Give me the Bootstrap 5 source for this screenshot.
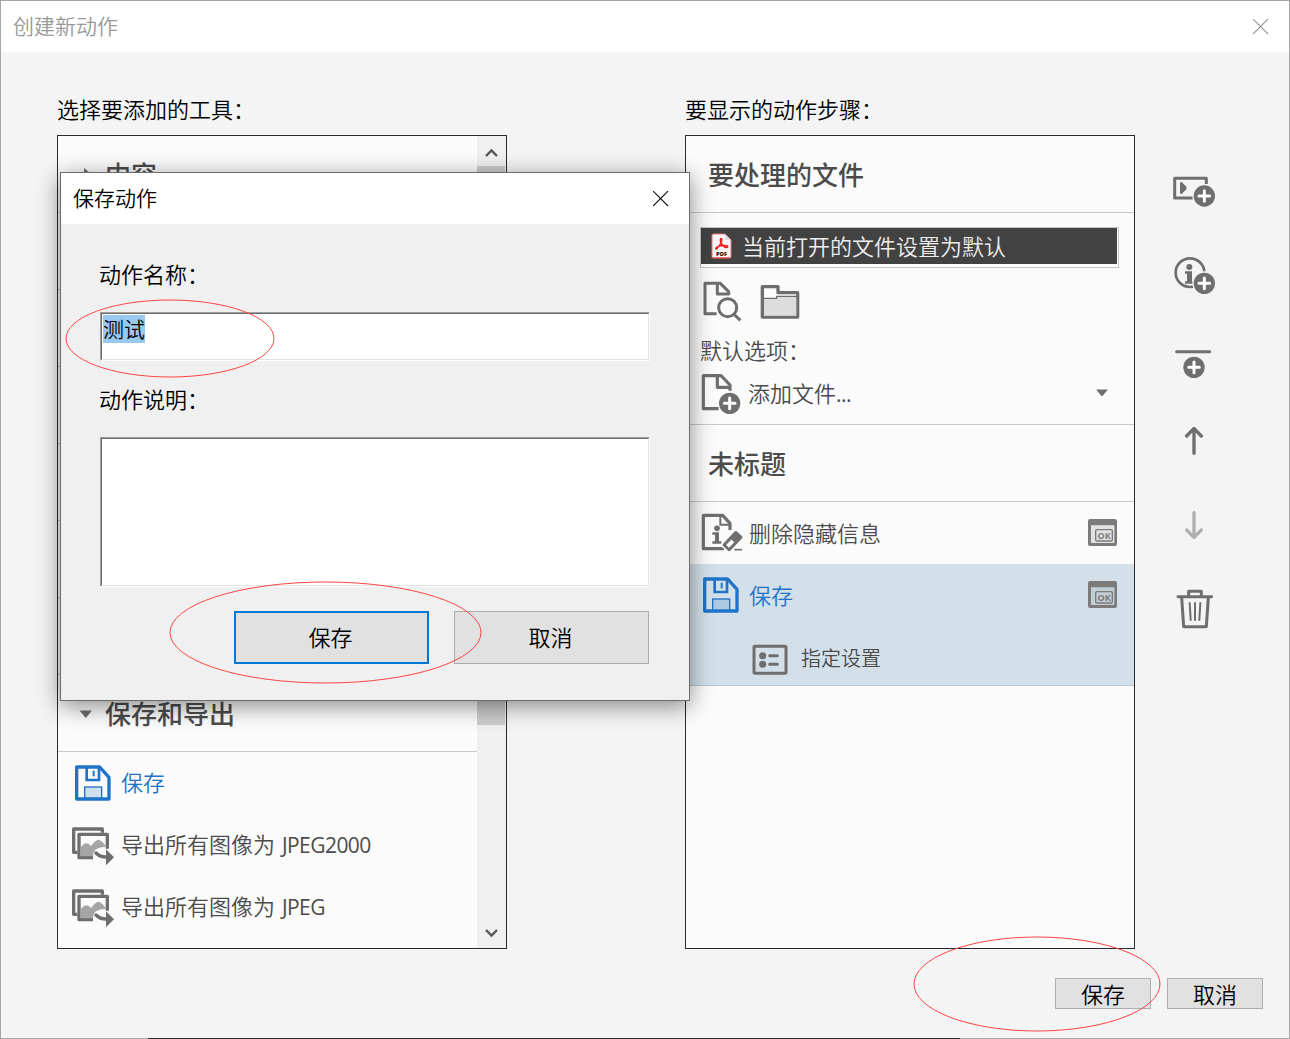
<!DOCTYPE html>
<html lang="zh-CN">
<head>
<meta charset="utf-8">
<title>创建新动作</title>
<meta name="viewport" content="width=device-width, initial-scale=1">
<link href="https://cdn.jsdelivr.net/npm/bootstrap@5.3.0/dist/css/bootstrap.min.css" rel="stylesheet">
<style>
  body{font-family:"Noto Sans CJK SC",sans-serif;font-size:22px;line-height:30px;font-weight:350;color:#000;background:#a6a6a6;width:1290px;height:1039px;overflow:hidden}
  svg{display:block;flex:none}
  .window{width:1290px;height:1039px;border:1px solid #a6a6a6;background:#f4f4f4}
  .titlebar{height:51px;font-size:21px;padding:0 20px 0 12px;background:#fff}
  .titlebar span{padding-bottom:4px}
  .window>.titlebar{color:#999}
  .workarea{padding:41px 0 0 56px}
  .tool-col{width:450px;margin-right:178px}
  .step-col{width:450px}
  .pane{height:814px;border:1px solid #2b2b2b;background:#fbfbfb;color:#4b4b4b;margin-top:12px;overflow:hidden}
  .group-head{height:77px;border-bottom:1px solid #c8c8c8;font-size:26px;font-weight:500;line-height:36px;padding-top:20px}
  .tool-list .group-head{padding-left:21px}
  .tool-list .group-head svg{margin-right:13px}
  .tool-list .group-head svg.shut{margin-right:10px}
  .tool-list .entry svg{margin-top:1px}
  .tool-list .entry.accent svg{margin-top:-1px}
  .step-list .group-head{padding-left:22px}
  .entry{height:62px}
  .entry span{padding-bottom:3px}
  .entry.accent span{padding-bottom:4px}
  .entry .latin{padding:0}
  .tool-list .entry{padding-left:13px}
  .accent{color:#1f73c9}
  .latin{font-family:"Open Sans",sans-serif;font-size:21px;letter-spacing:-.55px;font-weight:400;margin-left:2px}
  .scroller{width:29px;background:#f0f0f0;padding:12px 0 10px}
  .thumb{width:28px;height:559px;background:#cdcdcd;margin-top:8px}
  .files{height:212px;border-bottom:1px solid #c8c8c8;padding:14px 15px 0 14px}
  .file-box{height:41px;border:1px solid #c4c4c4;background:#fff}
  .file-pick{height:36px;background:#424242;color:#eee;padding-left:10px;margin-right:1px}
  .file-pick span{padding:0 0 3px 10px}
  .default-label{margin-top:12px}
  .default-row{margin-top:6px}
  .default-row span{padding-bottom:1px}
  .step-text{margin-left:6px}
  .raise{margin-top:-2px}
  .chosen{height:122px;background:#d3e0e9;border-bottom:1px solid #b9c6ce}
  .step-list .entry{padding:0 16px 0 14px}
  .sub{padding:9px 0 0 66px;font-size:20px;margin-top:8px}
  .sub span{padding:0 0 3px 5px}
  .side{width:60px;margin-left:29px;padding-top:82px}
  .push{height:31px;width:96px;border:1px solid #adadad;background:#e1e1e1;color:#000;font-size:22px;font-weight:350;line-height:28px;padding:0 0 2px;border-radius:0}
  .foot{padding:29px 26px 0 0;gap:16px}
  .dialog-box{position:absolute;left:60px;top:172px;width:630px;height:529px;border:1px solid #6c6c6c;background:#f0f0f0;box-shadow:0 5px 22px rgba(0,0,0,.45)}
  .fields{padding:34px 39px 0}
  .field-name{margin-left:-1px}
  .field-name.second{margin-top:22px}
  .sunken{background:#fff;border:1px solid;border-color:#a0a0a0 #fff #fff #a0a0a0;width:550px}
  .sunken>div{border:1px solid;border-color:#696969 #e3e3e3 #e3e3e3 #696969;padding:1px}
  .name-in{height:47px;font-size:21px;line-height:26px}
  .name-in span{display:inline-block;height:28px;background:#99c9ef}
  .note-in{height:148px}
  .big .push{width:195px;height:53px;line-height:46px;padding:0 2px 4px 0}
  .big{gap:25px;padding-right:1px;margin-top:24px}
  .push.ready{border:2px solid #0078d7}
  .markup{position:absolute;left:0;top:0;pointer-events:none}
  .behind{position:absolute;left:148px;top:1038px;width:812px;height:1px;background:#2b2b2b}
</style>
<script src="https://cdn.jsdelivr.net/npm/bootstrap@5.3.0/dist/js/bootstrap.bundle.min.js"></script>
</head>
<body class="position-relative">
<svg width="0" height="0" class="position-absolute">
  <defs>
    <symbol id="plus" viewBox="0 0 72 72"><circle cx="36" cy="36" r="32" fill="#6e6e6e"/><path d="M36 20V52M20 36H52" stroke="#fff" stroke-width="9" stroke-linecap="round"/></symbol>
    <symbol id="floppy" viewBox="66 438 114 114"><path d="M74 447H143L171 478V543H74Z" fill="none" stroke="#1f73c9" stroke-width="10" stroke-linejoin="round"/><path d="M104 447V486H141V447" fill="none" stroke="#1f73c9" stroke-width="8"/><rect x="122" y="458" width="6" height="17" fill="#1f73c9"/><rect x="98" y="507" width="51" height="37" fill="#1f73c9" fill-opacity=".2" stroke="#1f73c9" stroke-width="4"/></symbol>
    <symbol id="images" viewBox="93 438 132 120"><path d="M112 517H101V447H187V458" fill="none" stroke="#6e6e6e" stroke-width="10" stroke-linejoin="round"/><path d="M159 533H117V463H202V506" fill="none" stroke="#6e6e6e" stroke-width="10" stroke-linejoin="round"/><path d="M122 529V502Q139 480 153 498Q164 482 175 479Q188 482 198 500Q180 500 168 508Q160 514 159 529Z" fill="#a5a5a5"/><path d="M168 519Q181 532 201 531" fill="none" stroke="#6e6e6e" stroke-width="10" stroke-linecap="round"/><path d="M198 508L222 532 198 556Z" fill="#6e6e6e"/></symbol>
    <symbol id="prompt" viewBox="1221 264 93 87"><path fill-rule="evenodd" d="M1230 267H1305Q1311 267 1311 273V342Q1311 348 1305 348H1230Q1224 348 1224 342V273Q1224 267 1230 267ZM1233 286V339H1303V286Z" fill="#7b7b7b"/><path d="M1233 286H1303V339H1233Z" fill="#888" fill-opacity=".22"/><rect x="1247" y="299" width="50" height="34" rx="4" fill="none" stroke="#7b7b7b" stroke-width="4"/><text x="1272.5" y="325.500" text-anchor="middle" font-family="Open Sans" font-weight="700" font-size="27" fill="#7b7b7b">OK</text></symbol>
  </defs>
</svg>

<div class="window">
  <header class="titlebar d-flex align-items-center justify-content-between">
    <span>创建新动作</span>
    <svg width="16" height="16" viewBox="0 0 16 16" stroke="#999" stroke-width="1.1"><path d="M0 0L15 15M15 0L0 15"/></svg>
  </header>

  <main class="workarea d-flex">
    <section class="tool-col">
      <div>选择要添加的工具：</div>
      <div class="pane tool-list d-flex">
        <div class="flex-grow-1">
          <div class="group-head d-flex"><svg class="shut" width="16" height="36" viewBox="0 0 16 36"><path d="M5 12L12 18 5 24Z" fill="#6e6e6e"/></svg>内容</div>
          <div class="group-head"></div><div class="group-head"></div><div class="group-head"></div>
          <div class="group-head"></div><div class="group-head"></div><div class="group-head"></div>
          <div class="group-head d-flex"><svg width="13" height="36" viewBox="0 0 13 36"><path d="M.5 15.500H13L6.800 23Z" fill="#6e6e6e"/></svg>保存和导出</div>
          <div class="entry d-flex align-items-center accent"><svg width="50" height="38"><use href="#floppy" x="3" y="0" width="38" height="38"/></svg><span>保存</span></div>
          <div class="entry d-flex align-items-center"><svg width="50" height="40"><use href="#images" x="0" y="0" width="44" height="40"/></svg><span>导出所有图像为 <span class="latin">JPEG2000</span></span></div>
          <div class="entry d-flex align-items-center"><svg width="50" height="40"><use href="#images" x="0" y="0" width="44" height="40"/></svg><span>导出所有图像为 <span class="latin">JPEG</span></span></div>
        </div>
        <div class="scroller d-flex flex-column justify-content-between">
          <div>
            <svg class="mx-auto" width="13" height="10" viewBox="0 0 13 10"><path d="M1 8L6.500 2.500 12 8" fill="none" stroke="#555" stroke-width="2.400"/></svg>
            <div class="thumb"></div>
          </div>
          <svg class="mx-auto" width="13" height="10" viewBox="0 0 13 10"><path d="M1 2L6.500 7.500 12 2" fill="none" stroke="#555" stroke-width="2.400"/></svg>
        </div>
      </div>
    </section>

    <section class="step-col">
      <div>要显示的动作步骤：</div>
      <div class="pane step-list">
        <div class="group-head">要处理的文件</div>
        <div class="files">
          <div class="file-box"><div class="file-pick d-flex align-items-center">
            <svg width="21" height="26" viewBox="0 0 21 26"><path d="M2.500 1H14L20 7V23.500Q20 25 18.500 25H2.500Q1 25 1 23.500V2.500Q1 1 2.500 1Z" fill="#f7f7f7" stroke="#e8797b" stroke-width="1"/><path d="M14 1L20 7H14Z" fill="#ddd"/><path d="M9.800 5.500C12.200 5 10.500 11 5.600 16C3.500 16.200 5 13.300 10 12.700C15.500 11.800 18 13.300 16 14.500C13 15 8 9 9.800 5.500Z" fill="none" stroke="#f02222" stroke-width="1.500"/><text x="10.500" y="23" text-anchor="middle" font-family="Open Sans" font-size="5.800" font-weight="800" fill="#222">PDF</text><path d="M2 25H19" stroke="#e03030"/></svg>
            <span>当前打开的文件设置为默认</span></div></div>
          <div class="d-flex mt-2 pt-1">
            <svg width="42" height="42" viewBox="60 30 126 126" fill="none" stroke="#6e6e6e" stroke-width="9" stroke-linejoin="round"><path d="M110 131H75V40H121L146 65V75"/><path d="M112 42V72H148"/><circle cx="143" cy="113" r="27"/><path d="M163 134L181 151" stroke-width="9"/></svg>
            <svg class="ms-3" width="42" height="42" viewBox="234 30 126 126" fill="none" stroke="#6e6e6e" stroke-width="10" stroke-linejoin="round"><path d="M247 50H294V68H353V141H247Z"/><path d="M252 86H290V80H349V137H252Z" fill="#ddd" stroke="none"/><path d="M250 85H290V79H350" stroke-width="4"/></svg>
          </div>
          <div class="default-label">默认选项：</div>
          <div class="d-flex align-items-center justify-content-between default-row">
            <div class="d-flex align-items-center">
              <svg width="42" height="46" viewBox="60 300 126 138" fill="none" stroke="#6e6e6e" stroke-width="9.500" stroke-linejoin="round"><path d="M116 416H70V317H123L150 345V362"/><path d="M112 318V352H150"/><use href="#plus" x="113" y="364" width="72" height="72" stroke="none"/></svg>
              <span class="step-text">添加文件<span class="latin m-0">...</span></span>
            </div>
            <svg class="me-2" width="16" height="8" viewBox="0 0 16 8"><path d="M1 .5H13L7 7.500Z" fill="#6e6e6e"/></svg>
          </div>
        </div>
        <div class="group-head">未标题</div>
        <div class="entry d-flex align-items-center">
          <svg width="43" height="42" viewBox="60 246 129 126"><path d="M132 356H70V256H128L150 280V300" fill="none" stroke="#6e6e6e" stroke-width="9.500" stroke-linejoin="round"/><path d="M121 258V284H150" fill="none" stroke="#6e6e6e" stroke-width="6"/><circle cx="111" cy="295" r="8.500" fill="#6e6e6e"/><path d="M97 307H117V334H124V341H97V334H105V314H97Z" fill="#6e6e6e"/><g transform="rotate(-47 157 334)"><rect x="123" y="315" width="68" height="38" rx="8" fill="#fbfbfb"/><rect x="128" y="319" width="60" height="30" rx="5" fill="#6e6e6e"/><rect x="136" y="328" width="23" height="12" fill="#fbfbfb"/></g><path d="M163 359H186" stroke="#6e6e6e" stroke-width="5"/></svg>
          <span class="step-text flex-grow-1">删除隐藏信息</span>
          <svg class="raise" width="31" height="29"><use href="#prompt"/></svg>
        </div>
        <div class="chosen">
          <div class="entry d-flex align-items-center">
            <svg width="43" height="38"><use href="#floppy" x="2" y="0" width="38" height="38"/></svg>
            <span class="step-text flex-grow-1 accent">保存</span>
            <svg class="raise" width="31" height="29"><use href="#prompt"/></svg>
          </div>
          <div class="sub d-flex align-items-center">
            <svg class="me-2" width="36" height="32" viewBox="216 642 108 96" fill="none" stroke="#6e6e6e" stroke-width="9"><rect x="222" y="649" width="96" height="81" rx="3"/><path d="M269 677H292M269 703H292" stroke-linecap="round"/><circle cx="248" cy="677" r="10.500" fill="#6e6e6e" stroke="none"/><circle cx="248" cy="703" r="10.500" fill="#6e6e6e" stroke="none"/></svg>
            <span>指定设置</span>
          </div>
        </div>
      </div>
    </section>

    <nav class="side d-flex flex-column align-items-center">
      <svg width="44" height="33" viewBox="66 45 132 99"><path d="M130 114H74V55H169V72" fill="none" stroke="#6e6e6e" stroke-width="9" stroke-linejoin="round"/><path d="M90 67H96L109 80V88L96 101H90Z" fill="#6e6e6e"/><circle cx="163" cy="108" r="36" fill="#f4f4f4"/><use href="#plus" x="127" y="72" width="72" height="72"/></svg>
      <svg class="mt-5" width="43" height="39" viewBox="69 288 129 117"><circle cx="120" cy="338" r="43" fill="none" stroke="#6e6e6e" stroke-width="8"/><circle cx="118" cy="321" r="9" fill="#6e6e6e"/><path d="M105 334H126V364H131V371H105V364H111V341H105Z" fill="#6e6e6e"/><circle cx="163" cy="370" r="36" fill="#f4f4f4"/><use href="#plus" x="127" y="334" width="72" height="72"/></svg>
      <svg class="mt-5" width="38" height="36" viewBox="75 549 114 108"><path d="M80 575H179" stroke="#6e6e6e" stroke-width="9" stroke-linecap="round"/><use href="#plus" x="96" y="586" width="72" height="72"/></svg>
      <svg class="mt-5" width="20" height="29" viewBox="102 51 60 87" fill="none" stroke="#6e6e6e" stroke-width="10" stroke-linecap="round" stroke-linejoin="round"><path d="M132 130V57M110 78L132 55 154 78"/></svg>
      <svg class="mt-5" width="20" height="37" viewBox="102 282 60 111" fill="none" stroke="#b0b0b0" stroke-width="10" stroke-linecap="round" stroke-linejoin="round"><path d="M132 308V381M110 360L132 382 154 360"/></svg>
      <svg class="mt-5" width="38" height="41" viewBox="75 537 114 123" fill="none" stroke="#6e6e6e" stroke-width="9" stroke-linecap="round" stroke-linejoin="round"><path d="M84 560H185M116 558V544H154V558M95 562L101 650H169L175 562"/><path d="M119 579L122 630M135 579V630M151 579L148 630" stroke-width="6"/></svg>
    </nav>
  </main>
  <footer class="foot d-flex justify-content-end">
    <button class="btn push">保存</button><button class="btn push">取消</button>
  </footer>
</div>

<div class="dialog-box" role="dialog">
  <header class="titlebar d-flex align-items-center justify-content-between">
    <span>保存动作</span>
    <svg width="16" height="16" viewBox="0 0 16 16" stroke="#111" stroke-width="1.100"><path d="M0 0L15 15M15 0L0 15"/></svg>
  </header>
  <div class="fields">
    <div class="field-name">动作名称：</div>
    <div class="sunken mt-4"><div class="name-in"><span>测试</span></div></div>
    <div class="field-name second">动作说明：</div>
    <div class="sunken mt-4"><div class="note-in"></div></div>
    <div class="big d-flex justify-content-end"><button class="btn push ready">保存</button><button class="btn push">取消</button></div>
  </div>
</div>

<div class="behind"></div>
<svg class="markup" width="1290" height="1039" fill="none" stroke="#f44" stroke-width="1"><ellipse cx="170" cy="338.500" rx="104" ry="38.500"/><ellipse cx="325.500" cy="632.500" rx="155.500" ry="50.500"/><ellipse cx="1037" cy="984" rx="123" ry="47"/></svg>
</body>
</html>
